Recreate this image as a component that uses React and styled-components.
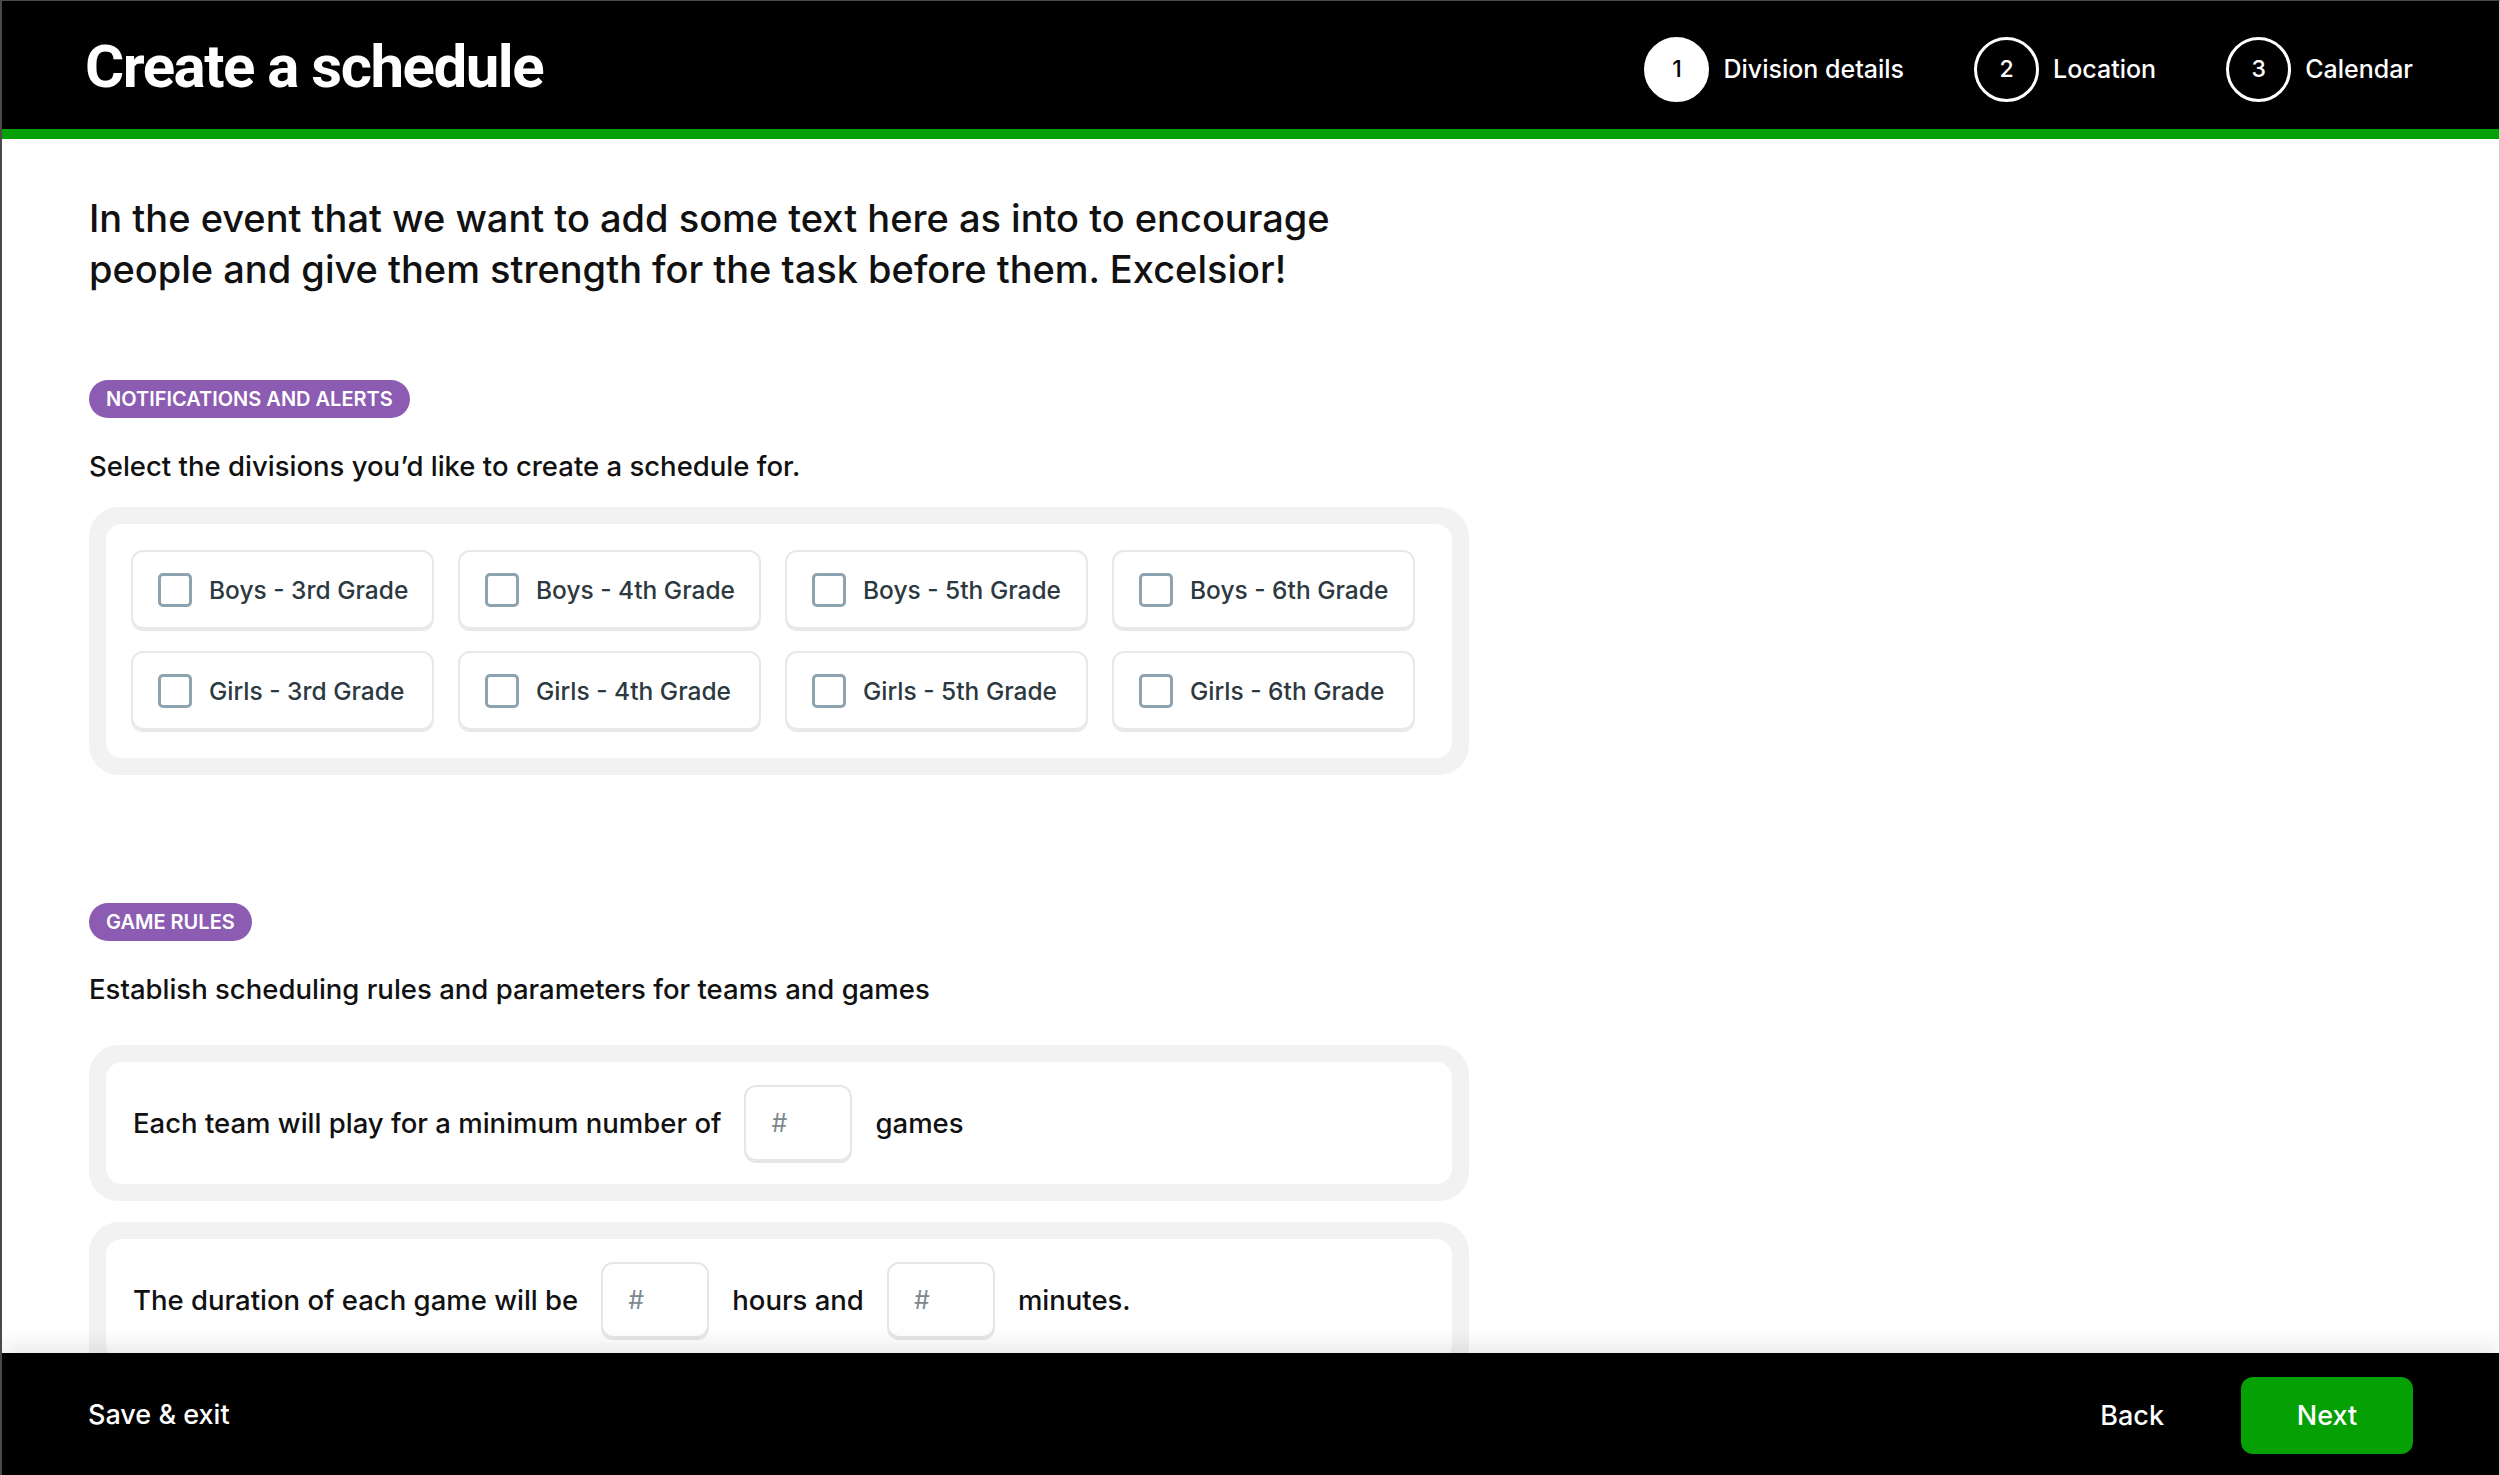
import React from "react";
import styled, { createGlobalStyle } from "styled-components";

const GlobalStyle = createGlobalStyle`
  html, body {
    margin: 0;
    padding: 0;
    height: 100%;
    overflow: hidden;
    background: #fff;
  }
  #root {
    height: 100%;
  }
  * {
    box-sizing: border-box;
  }
`;

const Page = styled.div`
  height: 100vh;
  display: flex;
  flex-direction: column;
  font-family: "Inter", "Noto Sans", sans-serif;
  color: #111;
  border-left: 2px solid #4a4a4a;
  border-top: 1px solid #4a4a4a;
  border-right: 1px solid #cfcfcf;
  overflow: hidden;
`;

const Header = styled.header`
  flex: none;
  height: 138px;
  background: #000;
  border-bottom: 10px solid #04a004;
  display: flex;
  align-items: center;
  justify-content: space-between;
  padding: 0 86px 0 83px;
`;

const Title = styled.h1`
  margin: 2px 0 0;
  color: #fff;
  font-family: "Roboto", "Liberation Sans", sans-serif;
  font-weight: 700;
  font-size: 60px;
  letter-spacing: -1.5px;
`;

const Steps = styled.nav`
  display: flex;
  align-items: center;
  gap: 70px;
  margin-top: 8px;
`;

const Step = styled.div`
  display: flex;
  align-items: center;
  gap: 14px;
  color: #fff;
  font-size: 25px;
  font-weight: 500;
`;

const StepCircle = styled.span`
  width: 65px;
  height: 65px;
  border-radius: 50%;
  border: 3px solid #fff;
  display: flex;
  align-items: center;
  justify-content: center;
  font-size: 23px;
  font-weight: 500;
  background: ${(p) => (p.$active ? "#fff" : "transparent")};
  color: ${(p) => (p.$active ? "#000" : "#fff")};
`;

const Main = styled.main`
  flex: 1;
  min-height: 0;
  overflow: hidden;
  padding: 54px 0 0 87px;
`;

const Intro = styled.p`
  margin: 0 0 85px;
  max-width: 1320px;
  font-size: 38px;
  line-height: 51px;
  font-weight: 500;
`;

const Badge = styled.span`
  display: inline-flex;
  align-items: center;
  height: 38px;
  padding: 0 17px;
  border-radius: 19px;
  background: #8b5cb1;
  color: #fff;
  font-size: 20px;
  font-weight: 600;
  text-transform: uppercase;
`;

const Lead = styled.p`
  margin: ${(p) => p.$margin};
  font-size: 27.5px;
  line-height: 36px;
  font-weight: 500;
`;

const Card = styled.div`
  width: 1380px;
  background: #f2f2f2;
  border-radius: 30px;
  padding: 17px;
  margin-bottom: ${(p) => p.$gap || "0"};
`;

const Panel = styled.div`
  background: #fff;
  border-radius: 16px;
`;

const DivisionGrid = styled(Panel)`
  display: grid;
  grid-template-columns: repeat(4, 303px);
  column-gap: 24px;
  row-gap: 22px;
  padding: 26px 25px 28px;
`;

const Division = styled.label`
  height: 79px;
  border: 2px solid #e8e8e8;
  box-shadow: 0 2px 0 #e8e8e8;
  border-radius: 12px;
  display: flex;
  align-items: center;
  gap: 17px;
  padding: 0 20px 0 25px;
  color: #2d3940;
  font-size: 24.5px;
  font-weight: 500;
  white-space: nowrap;
  cursor: pointer;
`;

const Box = styled.span`
  flex: none;
  width: 34px;
  height: 34px;
  border: 3px solid #8ea3b0;
  border-radius: 5px;
`;

const RuleRow = styled(Panel)`
  height: 122px;
  display: flex;
  align-items: center;
  gap: 23px;
  padding: 0 27px;
  font-size: 27.5px;
  font-weight: 500;
`;

const NumberBox = styled.span`
  flex: none;
  width: 108px;
  height: 76px;
  border: 2px solid #e6e6e6;
  box-shadow: 0 2px 0 #e6e6e6;
  border-radius: 12px;
  display: flex;
  align-items: center;
  padding-left: 25px;
  color: #7b8890;
  font-size: 25px;
  font-weight: 400;
`;

const Footer = styled.footer`
  flex: none;
  position: relative;
  z-index: 1;
  height: 122px;
  background: #000;
  display: flex;
  align-items: center;
  justify-content: space-between;
  padding: 0 86px 0 86px;
  box-shadow: 0 -8px 22px rgba(0, 0, 0, 0.09);
  color: #fff;
`;

const TextButton = styled.button`
  background: none;
  border: none;
  padding: 0;
  color: #fff;
  font-family: inherit;
  font-size: 27px;
  font-weight: 500;
  cursor: pointer;
`;

const Actions = styled.div`
  display: flex;
  align-items: center;
  gap: 77px;
  margin-top: 2px;
`;

const NextButton = styled.button`
  width: 172px;
  height: 77px;
  border: none;
  border-radius: 12px;
  background: #04a004;
  color: #fff;
  font-family: inherit;
  font-size: 27px;
  font-weight: 500;
  cursor: pointer;
`;

const steps = ["Division details", "Location", "Calendar"];
const divisions = [
  "Boys - 3rd Grade",
  "Boys - 4th Grade",
  "Boys - 5th Grade",
  "Boys - 6th Grade",
  "Girls - 3rd Grade",
  "Girls - 4th Grade",
  "Girls - 5th Grade",
  "Girls - 6th Grade",
];

export default function App() {
  return (
    <>
      <GlobalStyle />
      <Page>
        <Header>
          <Title>Create a schedule</Title>
          <Steps>
            {steps.map((s, i) => (
              <Step key={s}>
                <StepCircle $active={i === 0}>{i + 1}</StepCircle>
                {s}
              </Step>
            ))}
          </Steps>
        </Header>
        <Main>
          <Intro>
            In the event that we want to add some text here as into to encourage
            people and give them strength for the task before them. Excelsior!
          </Intro>
          <Badge>Notifications and alerts</Badge>
          <Lead $margin="30px 0 23px">
            Select the divisions you’d like to create a schedule for.
          </Lead>
          <Card $gap="128px">
            <DivisionGrid>
              {divisions.map((d) => (
                <Division key={d}>
                  <Box />
                  {d}
                </Division>
              ))}
            </DivisionGrid>
          </Card>
          <Badge>Game rules</Badge>
          <Lead $margin="30px 0 38px">
            Establish scheduling rules and parameters for teams and games
          </Lead>
          <Card $gap="21px">
            <RuleRow>
              Each team will play for a minimum number of
              <NumberBox>#</NumberBox>
              games
            </RuleRow>
          </Card>
          <Card>
            <RuleRow>
              The duration of each game will be
              <NumberBox>#</NumberBox>
              hours and
              <NumberBox>#</NumberBox>
              minutes.
            </RuleRow>
          </Card>
        </Main>
        <Footer>
          <TextButton>Save &amp; exit</TextButton>
          <Actions>
            <TextButton>Back</TextButton>
            <NextButton>Next</NextButton>
          </Actions>
        </Footer>
      </Page>
    </>
  );
}
